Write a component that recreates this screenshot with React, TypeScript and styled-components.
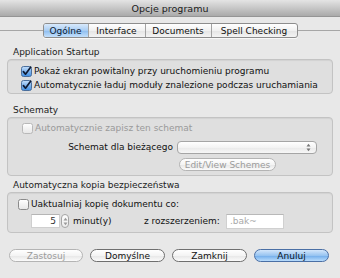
import React from 'react';
import styled, { createGlobalStyle, css } from 'styled-components';

const GlobalStyle = createGlobalStyle`
  html, body {
    margin: 0;
    padding: 0;
    background: #e8e8e8;
  }
  * {
    box-sizing: border-box;
  }
`;

const Window = styled.div`
  width: 340px;
  height: 278px;
  background: #e8e8e8;
  font-family: "DejaVu Sans", "Liberation Sans", sans-serif;
  font-size: 9px;
  color: #111;
  display: flex;
  flex-direction: column;
  overflow: hidden;
`;

const TitleBar = styled.div`
  height: 17px;
  flex: 0 0 17px;
  background: linear-gradient(#e4e4e4, #aaaaaa);
  border-bottom: 1px solid #959595;
  display: flex;
  align-items: center;
  justify-content: center;
  font-size: 9.5px;
  color: #1a1a1a;
`;

const TabStrip = styled.div`
  margin-top: 6px;
  height: 15px;
  display: flex;
  justify-content: center;
  position: relative;
  &::before {
    content: '';
    position: absolute;
    left: 0;
    right: 0;
    top: 7px;
    height: 1px;
    background: #a6a6a6;
  }
`;

const Segmented = styled.div`
  position: relative;
  display: flex;
  height: 15px;
  border: 1px solid #8d8d8d;
  border-radius: 3px;
  overflow: hidden;
  background: linear-gradient(#ffffff, #f1f1f1 50%, #e4e4e4 51%, #f4f4f4);
  box-shadow: 0 1px 0 rgba(255, 255, 255, 0.7);
`;

const Tab = styled.div<{ active?: boolean; w: number }>`
  width: ${p => p.w}px;
  display: flex;
  align-items: center;
  justify-content: center;
  font-size: 9px;
  color: #111;
  white-space: nowrap;
  & + & {
    border-left: 1px solid #a3a3a3;
  }
  ${p =>
    p.active &&
    css`
      background: linear-gradient(#d8e9fb, #a9cdf3 50%, #8cbcef 51%, #c4e1fd);
      color: #0b1a33;
    `}
`;

const Content = styled.div`
  padding: 0 7px;
  display: flex;
  flex-direction: column;
`;

const SectionLabel = styled.div<{ top: number }>`
  margin-top: ${p => p.top}px;
  padding-left: 6px;
  height: 12px;
  line-height: 12px;
  color: #1c1c1c;
`;

const GroupBox = styled.div<{ h: number; pad: number }>`
  margin-top: 1px;
  height: ${p => p.h}px;
  padding: ${p => p.pad}px 10px 0 10px;
  background: #dfdfdf;
  border: 1px solid #c3c3c3;
  border-radius: 4px;
  box-shadow: inset 0 1px 1px rgba(0, 0, 0, 0.06);
  display: flex;
  flex-direction: column;
`;

const CheckRow = styled.label<{ disabled?: boolean; indent: number }>`
  height: 14px;
  display: flex;
  align-items: center;
  gap: 2px;
  padding-left: ${p => p.indent}px;
  color: ${p => (p.disabled ? '#9a9a9a' : '#111')};
  white-space: nowrap;
`;

const FormRow = styled.div<{ h: number; top?: number }>`
  height: ${p => p.h}px;
  margin-top: ${p => p.top ?? 0}px;
  display: flex;
  align-items: center;
  white-space: nowrap;
`;

const RightLabel = styled.div<{ w: number }>`
  width: ${p => p.w}px;
  margin-left: -10px;
  text-align: right;
  padding-right: 4px;
`;

const Spacer = styled.div<{ w: number }>`
  flex: 0 0 ${p => p.w}px;
`;

const InlineLabel = styled.span<{ w: number; left?: number }>`
  width: ${p => p.w}px;
  margin-left: ${p => p.left ?? 0}px;
`;

const Popup = styled.div`
  width: 140px;
  height: 13px;
  border: 1px solid #a5a5a5;
  border-radius: 4px;
  background: linear-gradient(#ffffff, #f3f3f3 50%, #e9e9e9 51%, #f7f7f7);
  display: flex;
  align-items: center;
  justify-content: flex-end;
  padding-right: 5px;
`;

const PillButton = styled.div<{ w: number; disabled?: boolean; primary?: boolean }>`
  width: ${p => p.w}px;
  height: 13px;
  border-radius: 7px;
  border: 1px solid ${p => (p.disabled ? '#b4b4b4' : '#6f6f6f')};
  background: linear-gradient(#ffffff, #f4f4f4 50%, #e6e6e6 51%, #fbfbfb);
  color: ${p => (p.disabled ? '#9c9c9c' : '#111')};
  display: flex;
  align-items: center;
  justify-content: center;
  white-space: nowrap;
  ${p =>
    p.primary &&
    css`
      border-color: #4a6fa5;
      background: linear-gradient(#d3e6fb, #98c4f1 50%, #6fabea 51%, #b9dcfc);
      color: #0b1426;
    `}
`;

const NumberField = styled.div<{ left: number }>`
  width: 29px;
  height: 14px;
  margin-left: ${p => p.left}px;
  background: #fff;
  border: 1px solid #cfcfcf;
  border-top-color: #b5b5b5;
  display: flex;
  align-items: center;
  justify-content: flex-end;
  padding-right: 3px;
  color: #333;
`;

const Stepper = styled.div`
  width: 8px;
  height: 14px;
  margin-left: 1px;
  border: 1px solid #a5a5a5;
  border-radius: 4px;
  background: linear-gradient(#fdfdfd, #ececec);
  display: flex;
  align-items: center;
  justify-content: center;
`;

const TextField = styled.div`
  width: 58px;
  height: 15px;
  background: #fff;
  border: 1px solid #d0d0d0;
  border-top-color: #b8b8b8;
  display: flex;
  align-items: center;
  padding-left: 3px;
  color: #a8a8a8;
`;

const ButtonBar = styled.div`
  margin-top: 16px;
  padding: 0 11px 0 9px;
  display: flex;
  justify-content: space-between;
`;

const CheckBox: React.FC<{ checked?: boolean; disabled?: boolean }> = ({ checked, disabled }) => (
  <svg width="11" height="11" viewBox="0 0 11 11">
    <defs>
      <linearGradient id="cbOn" x1="0" y1="0" x2="0" y2="1">
        <stop offset="0" stopColor="#c6e0fb" />
        <stop offset="0.5" stopColor="#7fb4ee" />
        <stop offset="1" stopColor="#3f8fe4" />
      </linearGradient>
      <linearGradient id="cbOff" x1="0" y1="0" x2="0" y2="1">
        <stop offset="0" stopColor="#ffffff" />
        <stop offset="1" stopColor="#e6e6e6" />
      </linearGradient>
    </defs>
    <rect
      x="0.5"
      y="0.5"
      width="10"
      height="10"
      rx="2"
      fill={checked ? 'url(#cbOn)' : 'url(#cbOff)'}
      stroke={checked ? '#4b6f9c' : disabled ? '#b8b8b8' : '#8a8a8a'}
    />
    {checked && (
      <path d="M2.4 5.6 L4.5 8.2 L9.6 1.2" fill="none" stroke="#0f1b33" strokeWidth="1.7" strokeLinecap="round" strokeLinejoin="round" />
    )}
  </svg>
);

const UpDown: React.FC<{ color?: string }> = ({ color = '#555' }) => (
  <svg width="5" height="9" viewBox="0 0 5 9">
    <path d="M0.5 3.5 L2.5 0.8 L4.5 3.5 Z" fill={color} />
    <path d="M0.5 5.5 L2.5 8.2 L4.5 5.5 Z" fill={color} />
  </svg>
);

export default function App() {
  return (
    <Window>
      <GlobalStyle />
      <TitleBar>Opcje programu</TitleBar>
      <TabStrip>
        <Segmented>
          <Tab active w={44}>Ogólne</Tab>
          <Tab w={57}>Interface</Tab>
          <Tab w={66}>Documents</Tab>
          <Tab w={86}>Spell Checking</Tab>
        </Segmented>
      </TabStrip>
      <Content>
        <SectionLabel top={8}>Application Startup</SectionLabel>
        <GroupBox h={35} pad={4}>
          <CheckRow indent={3}>
            <CheckBox checked />
            Pokaż ekran powitalny przy uruchomieniu programu
          </CheckRow>
          <CheckRow indent={3}>
            <CheckBox checked />
            Automatycznie ładuj moduły znalezione podczas uruchamiania
          </CheckRow>
        </GroupBox>

        <SectionLabel top={10}>Schematy</SectionLabel>
        <GroupBox h={59} pad={3}>
          <CheckRow indent={4} disabled>
            <CheckBox disabled />
            Automatycznie zapisz ten schemat
          </CheckRow>
          <FormRow h={14} top={5}>
            <RightLabel w={169}>Schemat dla bieżącego</RightLabel>
            <Popup>
              <UpDown color="#777" />
            </Popup>
          </FormRow>
          <FormRow h={13} top={4}>
            <Spacer w={161} />
            <PillButton w={97} disabled>Edit/View Schemes</PillButton>
          </FormRow>
        </GroupBox>

        <SectionLabel top={3}>Automatyczna kopia bezpieczeństwa</SectionLabel>
        <GroupBox h={41} pad={4}>
          <CheckRow indent={0}>
            <CheckBox />
            Uaktualniaj kopię dokumentu co:
          </CheckRow>
          <FormRow h={16} top={2}>
            <NumberField left={13}>5</NumberField>
            <Stepper>
              <UpDown color="#9a9a9a" />
            </Stepper>
            <InlineLabel w={71} left={4}>minut(y)</InlineLabel>
            <InlineLabel w={82}>z rozszerzeniem:</InlineLabel>
            <TextField>.bak~</TextField>
          </FormRow>
        </GroupBox>
      </Content>
      <ButtonBar>
        <PillButton w={74} disabled>Zastosuj</PillButton>
        <PillButton w={75}>Domyślne</PillButton>
        <PillButton w={75}>Zamknij</PillButton>
        <PillButton w={75} primary>Anuluj</PillButton>
      </ButtonBar>
    </Window>
  );
}
